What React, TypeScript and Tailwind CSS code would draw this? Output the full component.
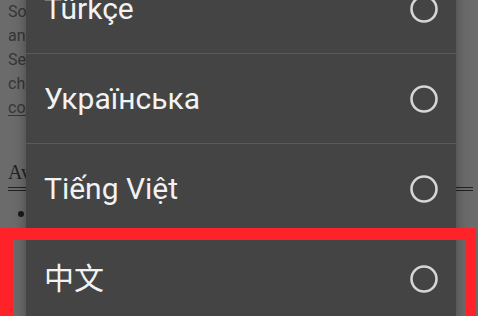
import { useState } from "react";

const LANGS = ["Türkçe", "Українська", "Tiếng Việt", "中文"];

function Radio() {
  return (
    <svg width="30" height="30" viewBox="0 0 30 30" aria-hidden="true">
      <circle cx="15" cy="15" r="12.5" fill="none" stroke="#d6d6d6" strokeWidth="2.6" />
    </svg>
  );
}

export default function App() {
  const [selected, setSelected] = useState<string | null>(null);

  return (
    <div
      className="relative w-[478px] h-[316px] overflow-hidden bg-[#6b6b6b]"
      style={{ fontFamily: "Roboto, 'Noto Sans CJK SC', sans-serif" }}
    >
      {/* page behind the dim overlay */}
      <div className="pl-[8px] pr-[5px] text-[16px] leading-[24px] text-[#363636]">
        <p>Some settings may not be available</p>
        <p>and change with each update.</p>
        <p>Select your language to</p>
        <p>change the interface</p>
        <p>
          <span className="underline underline-offset-2">contact us</span>
        </p>
        <div className="mt-[40px] border-b-[4px] border-double border-[#222222] pb-[1px]">
          <span className="text-[20px] leading-[24px] text-[#222222]" style={{ fontFamily: "'Liberation Serif', serif" }}>
            Available
          </span>
        </div>
        <ul className="mt-[11px] pl-[10px]">
          <li className="flex items-center gap-2">
            <span className="w-[6px] h-[6px] rounded-full bg-[#1a1a1a]" />
            <span>Item</span>
          </li>
        </ul>
      </div>

      {/* language dialog */}
      <div className="absolute left-[26px] top-[-36px] w-[430px] bg-[#444444] shadow-[0_0_12px_rgba(0,0,0,0.35)]">
        {LANGS.map((l) => (
          <button
            key={l}
            onClick={() => setSelected(l)}
            className="w-full h-[90px] flex items-center justify-between pl-[18px] pr-[17px] border-b border-[#5a5a5a] text-left"
          >
            <span className="text-[30px] text-[#f2f2f2] leading-none">{l}</span>
            <Radio />
            {selected === l && <span className="sr-only">selected</span>}
          </button>
        ))}
      </div>

      {/* red highlight */}
      <div className="absolute left-0 top-[228px] w-[476px] h-[120px] border-t-[12px] border-l-[13px] border-r-[10px] border-[#ff2228] blur-[0.6px]" />
    </div>
  );
}
